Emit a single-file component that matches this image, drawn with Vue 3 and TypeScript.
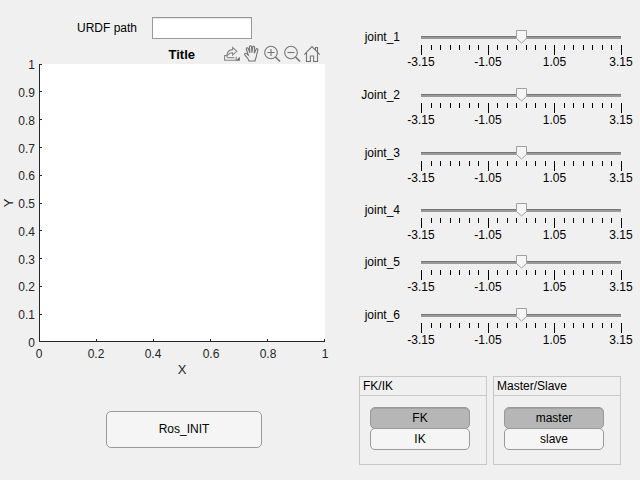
<script setup lang="ts">
import { ref } from 'vue'

const urdfPath = ref('')
const joints = ['joint_1', 'Joint_2', 'joint_3', 'joint_4', 'joint_5', 'joint_6']
const scale = ['-3.15', '-1.05', '1.05', '3.15']
const sliderTicks = Array.from({ length: 22 }, (_, i) => ({
  x: 20 + Math.round((i * 200) / 21),
  h: i % 7 === 0 ? 10 : 5,
}))
const scaleX = [20, 87, 153.5, 220]

const yTicks = [341, 314, 286, 258, 230, 203, 175, 147, 119, 91, 64].map((y, i) => ({
  label: String(i / 10),
  y,
  base: 347 - Math.round(i * 27.76),
}))
const xTicks = [39, 96, 153, 210, 267, 324].map((x, i) => ({
  label: String((i * 2) / 10),
  x,
  center: i > 2 ? x + 1 : x,
}))

const groups = ref([
  { title: 'FK/IK', options: ['FK', 'IK'], selected: 'FK' },
  { title: 'Master/Slave', options: ['master', 'slave'], selected: 'master' },
])
</script>

<template>
  <main class="app">
    <section class="left">
      <label class="path"><span>URDF path</span><input v-model="urdfPath" type="text" /></label>
      <div class="axes-head">
        <h2>Title</h2>
        <svg class="tools" width="100" height="20" viewBox="0 0 100 20" fill="none" stroke="#757575" stroke-width="1.1">
          <g stroke="#858585">
            <path d="M3.2 11.5H.6v4.7h11.6v-3.4" />
            <path d="M2.6 12.8c.2-4.6 2.2-7 6-7.2V3.4l4.2 3.9-4.2 3.8V8.8c-2.7 0-4.4 1.2-6 4z" />
            <path d="M3 13.7h7.4" />
            <path d="M15.8 12.8v4h-4z" fill="#666" stroke="none" />
          </g>
          <path d="M25 17c-.5-2-2-3.9-4.2-6.2-.8-.9.7-2.1 1.7-1.1l1.8 1.5-2-6.2c-.3-1.2 1.4-1.7 1.9-.5l1.7 4.4-.5-6.1c0-1.2 2-1.3 2.1 0l.4 5.9.8-5.6c.2-1.2 2-.9 1.9.3l-.3 5.8 1.8-4c.5-1.1 2.1-.5 1.8.6l-1.3 5.4c-.3 2.4-1.3 3.6-1.6 5.8z" />
          <g>
            <circle cx="47" cy="8.5" r="6.3" />
            <path d="M51.5 13l4.5 4.5" stroke-width="1.6" />
            <path d="M43.5 8.5h7M47 5v7" />
          </g>
          <g>
            <circle cx="67" cy="8.5" r="6.3" />
            <path d="M71.5 13l4.5 4.5" stroke-width="1.6" />
            <path d="M63.5 8.5h7" />
          </g>
          <path d="M80.3 10.6L88 2.6l7.8 8M82.5 8.8v8.7h3.9V12h3.2v5.5h3.9V8.8M91.5 6V3.5h2V8" />
        </svg>
      </div>
      <svg class="plot" width="340" height="317" viewBox="0 64 340 317">
        <rect x="39" y="64" width="286" height="278" fill="#fff" />
        <g fill="#262626" shape-rendering="crispEdges">
          <rect x="39" y="64" width="1" height="278" />
          <rect x="39" y="341" width="286" height="1" />
          <rect v-for="t in yTicks" :key="'y' + t.label" x="40" :y="t.y" width="2" height="1" />
          <rect v-for="t in xTicks" :key="'x' + t.label" :x="t.x" y="339" width="1" height="2" />
        </g>
        <g class="tick">
          <text v-for="t in yTicks" :key="t.label" x="35" :y="t.base" text-anchor="end">{{ t.label }}</text>
          <text v-for="t in xTicks" :key="t.label" :x="t.center" y="358" text-anchor="middle">{{ t.label }}</text>
        </g>
        <text class="axis" x="182" y="374" text-anchor="middle">X</text>
        <text class="axis" transform="translate(13 203) rotate(-90)" text-anchor="middle">Y</text>
      </svg>
      <button class="init" type="button">Ros_INIT</button>
    </section>

    <section class="right">
      <div class="joints">
        <div v-for="joint in joints" :key="joint" class="joint">
          <span class="joint-name">{{ joint }}</span>
          <svg width="240" height="44" viewBox="0 0 240 44">
            <g shape-rendering="crispEdges">
              <rect x="20" y="8" width="200" height="3" fill="#999" />
              <rect x="20" y="8" width="200" height="1" fill="#777" />
              <rect v-for="t in sliderTicks" :key="t.x" :x="t.x" y="17" width="1" :height="t.h" fill="#000" />
            </g>
            <path d="M115.5 2.5h10v8l-5 4.5-5-4.5z" fill="#f5f5f5" stroke="#a0a0a0" />
            <text v-for="(s, i) in scale" :key="s" :x="scaleX[i]" y="38" text-anchor="middle">{{ s }}</text>
          </svg>
        </div>
      </div>
      <div class="groups">
        <section v-for="g in groups" :key="g.title" class="group">
          <h3>{{ g.title }}</h3>
          <div class="toggles">
            <button
              v-for="o in g.options"
              :key="o"
              type="button"
              :class="{ selected: g.selected === o }"
              @click="g.selected = o"
            >{{ o }}</button>
          </div>
        </section>
      </div>
    </section>
  </main>
</template>

<style>
body {
  margin: 0;
  background: #f0f0f0;
}
</style>

<style scoped>
.app {
  box-sizing: border-box;
  display: grid;
  grid-template-columns: 340px 300px;
  width: 640px;
  height: 480px;
  overflow: hidden;
  background: #f0f0f0;
  color: #000;
  font: 12px/14px "Liberation Sans", Arial, sans-serif;
}
.left {
  display: flex;
  flex-direction: column;
}
.path {
  display: flex;
  align-items: center;
  gap: 15px;
  height: 22px;
  padding: 17px 0 0 77px;
}
.path span {
  width: 60px;
  white-space: nowrap;
}
input {
  box-sizing: border-box;
  width: 100px;
  height: 22px;
  padding: 0 4px;
  border: 1px solid #999;
  border-radius: 0;
  background: #fff;
  box-shadow: inset 0 1px #e6e6e6;
  font: inherit;
  outline: none;
}
.axes-head {
  display: flex;
  height: 20px;
  padding: 5px 0 0 168.5px;
}
h2 {
  width: 55.5px;
  margin: 3px 0 0;
  font-size: 13px;
  line-height: 15px;
}
.tools,
.plot {
  display: block;
  flex: none;
}
.plot {
  overflow: visible;
}
.tick {
  fill: #262626;
}
.axis {
  fill: #262626;
  font-size: 13px;
}
button {
  box-sizing: border-box;
  padding: 0;
  border: 1px solid #999;
  background: #f5f5f5;
  color: #000;
  font: inherit;
}
.init {
  width: 156px;
  height: 37px;
  margin: 30px 0 0 106px;
  padding-bottom: 1px;
  border-radius: 5px;
}
.right {
  padding-top: 28px;
}
.joints {
  display: grid;
  grid-template-rows: 58px 58px 57px 52px 53px 70px;
}
.joint {
  display: flex;
  justify-content: flex-end;
  align-items: flex-start;
  width: 301px;
}
.joint-name {
  margin: 2px 1px 0 0;
}
.joint svg {
  flex: none;
}
.groups {
  display: flex;
  gap: 6px;
  padding-left: 19px;
}
.group {
  box-sizing: border-box;
  width: 128px;
  height: 89px;
  border: 1px solid #c8c8c8;
}
h3 {
  height: 18px;
  margin: 0;
  padding-left: 3px;
  border-bottom: 1px solid #c8c8c8;
  font-size: 12px;
  font-weight: 400;
  line-height: 18px;
}
.toggles {
  display: flex;
  flex-direction: column;
  padding: 11px 0 0 10px;
}
.toggles button {
  width: 100px;
  height: 22px;
  border-radius: 5px;
}
.toggles button + button {
  margin-top: -1px;
}
.toggles .selected {
  background: #b6b6b6;
  box-shadow: inset 0 1px #a2a2a2;
}
</style>
